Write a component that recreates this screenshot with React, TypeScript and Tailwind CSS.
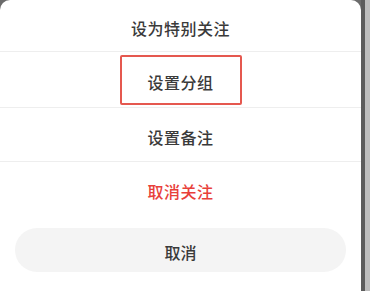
import React from "react";

const font = { fontFamily: '"Noto Sans CJK SC", "Noto Sans", sans-serif' };

export default function App() {
  const items = [
    { label: "设为特别关注", h: "h-[52px]", pad: "pt-[5px]", red: false },
    { label: "设置分组", h: "h-[56px]", pad: "pt-[5px]", red: false },
    { label: "设置备注", h: "h-[54px]", pad: "pt-[4px]", red: false },
    { label: "取消关注", h: "h-[53px]", pad: "pt-[4px]", red: true },
  ];
  return (
    <div className="w-[370px] h-[291px] flex bg-[#6b6b6b] overflow-hidden" style={font}>
      <div className="relative w-[361px] h-full bg-white rounded-t-[10px] flex flex-col">
        {items.map((it, i) => (
          <div
            key={it.label}
            className={`${it.h} ${it.pad} flex items-center justify-center ${i < 3 ? "border-b border-[#eeeeee]" : ""}`}
          >
            <span
              className={`text-[16px] font-medium tracking-[0.5px] ${it.red ? "text-[#e8403a]" : "text-[#3a3a3a]"}`}
            >
              {it.label}
            </span>
          </div>
        ))}
        <div className="mt-[13px] mx-[15px] h-[44px] pt-[3px] rounded-full bg-[#f4f4f4] flex items-center justify-center">
          <span className="text-[16px] font-medium text-[#3a3a3a]">取消</span>
        </div>
        <div className="absolute left-[120px] top-[55px] w-[122px] h-[50px] border-2 border-[#e5584f] rounded-[2px]" />
      </div>
      <div className="w-[4px] h-full bg-[#5c5c5c]" />
      <div className="flex-1 h-full bg-[#bdbdbd]" />
    </div>
  );
}
